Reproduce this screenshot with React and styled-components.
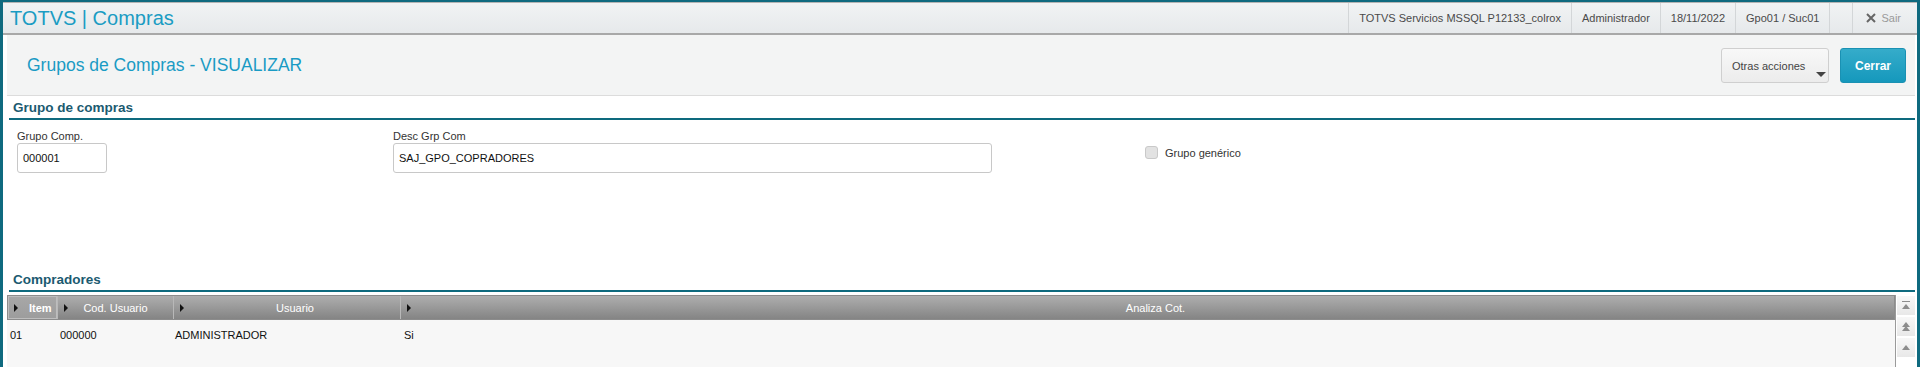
import React from "react";
import styled, { createGlobalStyle } from "styled-components";

const GlobalStyle = createGlobalStyle`
  html, body {
    margin: 0;
    padding: 0;
    background: #fff;
    font-family: "Liberation Sans", Arial, sans-serif;
  }
  * { box-sizing: border-box; }
`;

const Frame = styled.div`
  width: 1920px;
  height: 367px;
  overflow: hidden;
  border-top: 2px solid #0f6a7f;
  border-left: 3px solid #0f6a7f;
  border-right: 3px solid #0f6a7f;
  background: #fff;
  display: flex;
  flex-direction: column;
`;

const TopBar = styled.div`
  height: 33px;
  flex: none;
  display: flex;
  align-items: stretch;
  border-top: 1px solid #b4b4b4;
  border-bottom: 2px solid #a8a8a8;
  background: linear-gradient(#f1f3f4, #e6e9eb);
`;

const Brand = styled.div`
  display: flex;
  align-items: center;
  padding-left: 7px;
  font-size: 20px;
  color: #1a9cc3;
  flex: 1;
`;

const BarItem = styled.div`
  display: flex;
  align-items: center;
  padding: 0 10px;
  border-left: 1px solid #d3d6d8;
  font-size: 11px;
  color: ${(p) => (p.$muted ? "#9a9a9a" : "#4a4a4a")};
  width: ${(p) => (p.$w ? `${p.$w}px` : "auto")};
  gap: 5px;
`;

const Body = styled.div`
  flex: 1;
  display: flex;
  flex-direction: column;
  padding: 0 2px 0 4px;
`;

const TitlePanel = styled.div`
  height: 61px;
  flex: none;
  display: flex;
  align-items: center;
  justify-content: space-between;
  padding: 0 9px 0 20px;
  background: #f3f4f4;
  border-bottom: 1px solid #dcdcdc;
`;

const PageTitle = styled.h1`
  margin: 0;
  font-weight: normal;
  font-size: 17.5px;
  color: #1a9bc4;
`;

const Actions = styled.div`
  display: flex;
  gap: 11px;
  padding-top: 1px;
`;

const MenuButton = styled.button`
  width: 108px;
  height: 35px;
  display: flex;
  align-items: center;
  padding: 0 0 0 10px;
  border: 1px solid #cfcfcf;
  border-radius: 3px;
  background: linear-gradient(#f8f8f8, #ececec);
  font-family: inherit;
  font-size: 11px;
  color: #444;
`;

const Caret = styled.span`
  margin-left: auto;
  margin-right: 2px;
  align-self: flex-end;
  margin-bottom: 5px;
  width: 0;
  height: 0;
  border-left: 5px solid transparent;
  border-right: 5px solid transparent;
  border-top: 5px solid #444;
`;

const PrimaryButton = styled.button`
  width: 66px;
  height: 35px;
  border: 1px solid #1a91b3;
  border-radius: 3px;
  background: linear-gradient(#35acca, #1598bc);
  color: #fff;
  font-family: inherit;
  font-weight: bold;
  font-size: 12px;
`;

const SectionTitle = styled.div`
  height: 24px;
  flex: none;
  margin-left: 2px;
  padding: 0 4px;
  display: flex;
  align-items: center;
  font-weight: bold;
  font-size: 13.5px;
  color: #1b5a70;
  border-bottom: 2px solid #0e6a7e;
`;

const FieldsArea = styled.div`
  height: 148px;
  flex: none;
  display: flex;
  align-items: flex-start;
  padding: 9px 0 0 10px;
`;

const Field = styled.div`
  width: ${(p) => p.$w}px;
  display: flex;
  flex-direction: column;
`;

const Label = styled.label`
  font-size: 11px;
  color: #333;
  line-height: 14px;
`;

const Input = styled.div`
  width: ${(p) => p.$w}px;
  height: 30px;
  border: 1px solid #c8c8c8;
  border-radius: 3px;
  background: #fff;
  display: flex;
  align-items: center;
  padding-left: 5px;
  font-size: 11px;
  color: #111;
`;

const CheckRow = styled.div`
  display: flex;
  align-items: center;
  gap: 7px;
  margin-top: 17px;
  font-size: 11px;
  color: #333;
`;

const CheckBox = styled.span`
  width: 13px;
  height: 13px;
  border: 1px solid #c9c9c9;
  border-radius: 3px;
  background: #e2e2e2;
`;

const GridWrap = styled.div`
  flex: 1;
  margin-top: 3px;
  display: flex;
`;

const Grid = styled.div`
  flex: 1;
  display: flex;
  flex-direction: column;
  border-right: 1px solid #9a9a9a;
  background: #f7f7f7;
`;

const HeadRow = styled.div`
  height: 25px;
  display: flex;
  border: 1px solid #8c8c8c;
  background: linear-gradient(#aeaeae, #848484);
`;

const HeadCell = styled.div`
  position: relative;
  width: ${(p) => (p.$w ? `${p.$w}px` : "auto")};
  flex: ${(p) => (p.$w ? "none" : "1")};
  display: flex;
  align-items: center;
  justify-content: ${(p) => (p.$left ? "flex-start" : "center")};
  padding-left: ${(p) => p.$pad || 0}px;
  border-right: 1px solid #b8b8b8;
  background: ${(p) => (p.$active ? "linear-gradient(#a8a8a8, #9c9c9c)" : "transparent")};
  box-shadow: ${(p) => (p.$active ? "inset 0 0 0 1px #bdbdbd" : "none")};
  font-size: 11px;
  font-weight: ${(p) => (p.$active ? "bold" : "normal")};
  color: #fff;
  &:last-child { border-right: none; }
`;

const Arrow = styled.span`
  position: absolute;
  left: 6px;
  top: 8px;
  width: 0;
  height: 0;
  border-top: 4px solid transparent;
  border-bottom: 4px solid transparent;
  border-left: 4px solid #111;
`;

const DataRow = styled.div`
  height: 30px;
  display: flex;
  align-items: center;
  font-size: 11px;
  color: #111;
`;

const Cell = styled.div`
  width: ${(p) => (p.$w ? `${p.$w}px` : "auto")};
  flex: ${(p) => (p.$w ? "none" : "1")};
  padding-left: ${(p) => p.$pad || 1}px;
`;

const ScrollCol = styled.div`
  width: 19px;
  display: flex;
  flex-direction: column;
  gap: 2px;
  padding-top: 1px;
`;

const ScrollBtn = styled.div`
  height: 19px;
  display: flex;
  align-items: center;
  justify-content: center;
  background: linear-gradient(#f7f7f7, #e8e8e8);
  border-left: 1px solid #fff;
`;

const Tri = ({ y = 0 }) => <path d={`M1 ${y + 5} L5 ${y} L9 ${y + 5} Z`} fill="#8c8c8c" />;

function ScrollIcon({ kind }) {
  return (
    <svg width="10" height="11" viewBox="0 0 10 11">
      {kind === "top" && (
        <>
          <rect x="1" y="1" width="8" height="1" fill="#8c8c8c" />
          <Tri y={4} />
        </>
      )}
      {kind === "page" && (
        <>
          <Tri y={1} />
          <Tri y={5} />
        </>
      )}
      {kind === "up" && <Tri y={3} />}
    </svg>
  );
}

const columns = [
  { label: "Item", w: 50, active: true, left: true, pad: 21 },
  { label: "Cod. Usuario", w: 116, pad: 0 },
  { label: "Usuario", w: 227, pad: 16 },
  { label: "Analiza Cot.", pad: 16 },
];

export default function App() {
  return (
    <>
      <GlobalStyle />
      <Frame>
        <TopBar>
          <Brand>TOTVS | Compras</Brand>
          <BarItem>TOTVS Servicios MSSQL P12133_colrox</BarItem>
          <BarItem>Administrador</BarItem>
          <BarItem>18/11/2022</BarItem>
          <BarItem>Gpo01 / Suc01</BarItem>
          <BarItem $w={23} />
          <BarItem $muted style={{ paddingLeft: 13, paddingRight: 16 }}>
            <svg width="10" height="10" viewBox="0 0 10 10">
              <path d="M1 1 L9 9 M9 1 L1 9" stroke="#666" strokeWidth="2" />
            </svg>
            Sair
          </BarItem>
        </TopBar>
        <Body>
          <TitlePanel>
            <PageTitle>Grupos de Compras - VISUALIZAR</PageTitle>
            <Actions>
              <MenuButton>
                Otras acciones
                <Caret />
              </MenuButton>
              <PrimaryButton>Cerrar</PrimaryButton>
            </Actions>
          </TitlePanel>

          <SectionTitle>Grupo de compras</SectionTitle>
          <FieldsArea>
            <Field $w={376}>
              <Label>Grupo Comp.</Label>
              <Input $w={90}>000001</Input>
            </Field>
            <Field $w={752}>
              <Label>Desc Grp Com</Label>
              <Input $w={599}>SAJ_GPO_COPRADORES</Input>
            </Field>
            <CheckRow>
              <CheckBox />
              Grupo genérico
            </CheckRow>
          </FieldsArea>

          <SectionTitle>Compradores</SectionTitle>
          <GridWrap>
            <Grid>
              <HeadRow>
                {columns.map((c) => (
                  <HeadCell key={c.label} $w={c.w} $active={c.active} $left={c.left} $pad={c.pad}>
                    <Arrow />
                    {c.label}
                  </HeadCell>
                ))}
              </HeadRow>
              <DataRow>
                <Cell $w={50} $pad={3}>01</Cell>
                <Cell $w={116} $pad={3}>000000</Cell>
                <Cell $w={227} $pad={2}>ADMINISTRADOR</Cell>
                <Cell $pad={4}>Si</Cell>
              </DataRow>
            </Grid>
            <ScrollCol>
              <ScrollBtn><ScrollIcon kind="top" /></ScrollBtn>
              <ScrollBtn><ScrollIcon kind="page" /></ScrollBtn>
              <ScrollBtn><ScrollIcon kind="up" /></ScrollBtn>
            </ScrollCol>
          </GridWrap>
        </Body>
      </Frame>
    </>
  );
}
